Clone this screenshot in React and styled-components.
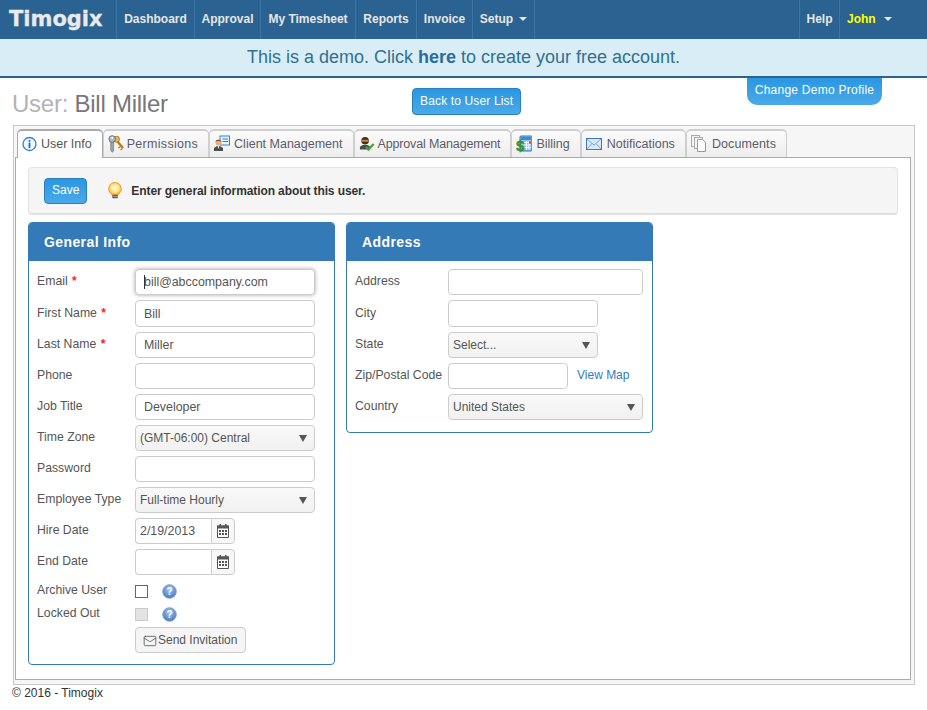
import React from "react";
import styled, { createGlobalStyle } from "styled-components";
import { Mail } from "lucide-react";

const GlobalStyle = createGlobalStyle`
  html, body {
    margin: 0;
    padding: 0;
    background: #fff;
  }
  body {
    font-family: "Liberation Sans", Arial, sans-serif;
    font-size: 12px;
    color: #555;
  }
  * { box-sizing: border-box; }
`;

const NavBar = styled.div`
  display: flex;
  align-items: stretch;
  height: 39px;
  background: #2a6291;
`;
const Logo = styled.div`
  width: 116px;
  padding-left: 9px;
  font-family: "DejaVu Sans", sans-serif;
  font-weight: 700;
  font-size: 21px;
  line-height: 39px;
  color: #eaeaea;
  -webkit-text-stroke: 0.3px #eaeaea;
`;
const NavItem = styled.a`
  display: flex;
  flex: none;
  align-items: center;
  justify-content: center;
  gap: ${(p) => p.$gap || 6}px;
  width: ${(p) => p.$w}px;
  padding-bottom: 2px;
  border-left: 1px solid #3c74a3;
  border-right: ${(p) => (p.$end ? "1px solid #3c74a3" : "0")};
  font-weight: 700;
  font-size: 12px;
  color: ${(p) => p.$color || "#e6e6e6"};
`;
const UserItem = styled(NavItem)`
  justify-content: flex-start;
  padding-left: 7px;
`;
const NavRight = styled.div`
  display: flex;
  margin-left: auto;
`;
const Caret = styled.span`
  width: 0;
  height: 0;
  margin-top: 1px;
  border-left: 4px solid transparent;
  border-right: 4px solid transparent;
  border-top: 4px solid #e6e6e6;
`;
const Banner = styled.div`
  position: relative;
  height: 39px;
  background: #d9edf7;
  border-bottom: 2px solid #2a6291;
  color: #31708f;
  font-size: 18px;
  line-height: 37px;
  text-align: center;
  b { color: #2a6c9e; }
`;
const DemoTab = styled.a`
  position: absolute;
  top: calc(100% + 2px);
  right: 45px;
  width: 135px;
  height: 27px;
  border-radius: 0 0 10px 10px;
  background: linear-gradient(#2a97e2, #4aa9e9);
  color: #fff;
  font-size: 12px;
  letter-spacing: 0.25px;
  line-height: 25px;
  text-align: center;
`;
const TitleRow = styled.div`
  display: flex;
  align-items: flex-start;
  height: 47px;
  padding: 10px 0 0 12px;
`;
const Title = styled.h1`
  width: 400px;
  margin: 0;
  font-size: 24px;
  font-weight: 400;
  letter-spacing: -0.25px;
  line-height: 32px;
  color: #777;
  span { color: #b3b3b3; }
`;
const BlueButton = styled.button`
  height: ${(p) => p.$h || 27}px;
  padding: 0 7px 1px;
  border: 1px solid #2a7fc0;
  border-radius: 4px;
  background: linear-gradient(#2a97e2, #4aa9e9);
  color: #fff;
  font-family: inherit;
  font-size: 12px;
  letter-spacing: ${(p) => p.$ls || 0};
`;
const SaveButton = styled(BlueButton)`
  margin-right: 20px;
`;
const Outer = styled.div`
  width: 902px;
  margin-left: 13px;
  padding: 3px 3px 4px 1px;
  border: 1px solid #c8c8c8;
  background: #f6f6f6;
`;
const TabBar = styled.div`
  display: flex;
  height: 29px;
  margin-bottom: -1px;
  padding-left: 2px;
`;
const Tab = styled.div`
  position: relative;
  display: flex;
  align-items: center;
  gap: ${(p) => p.$gap || 3}px;
  height: ${(p) => (p.$active ? 29 : 28)}px;
  padding: 0 10px 1px 4px;
  border: 1px solid ${(p) => (p.$active ? "#aaa" : "#cfcfcf")};
  border-top-width: 2px;
  border-bottom: 0;
  border-radius: 5px 5px 0 0;
  background: ${(p) => (p.$active ? "#fff" : "linear-gradient(#fbfbfb, #ededed)")};
  color: ${(p) => (p.$active ? "#555" : "#5c5c68")};
  font-size: 12.5px;
  letter-spacing: ${(p) => p.$ls || 0}px;
  z-index: ${(p) => (p.$active ? 2 : 0)};
  svg { flex: none; }
`;
const TabBody = styled.div`
  position: relative;
  padding: 9px 12px 14px;
  border: 1px solid #aaa;
  background: #fff;
`;
const Toolbar = styled.div`
  display: flex;
  align-items: center;
  height: 48px;
  margin-bottom: 7px;
  padding: 0 15px;
  border: 1px solid #e3e3e3;
  border-bottom: 2px solid #e0e0e0;
  border-radius: 4px;
  background: #f5f5f5;
`;
const Hint = styled.span`
  margin-left: 8px;
  font-weight: 700;
  font-size: 12px;
  letter-spacing: -0.1px;
  color: #333;
`;
const Columns = styled.div`
  display: flex;
  align-items: flex-start;
  gap: 11px;
`;
const Panel = styled.section`
  width: 307px;
  border: 1px solid #337ab7;
  border-radius: 4px;
  overflow: hidden;
`;
const PanelHead = styled.h2`
  height: 38px;
  margin: 0;
  padding-left: 15px;
  background: #337ab7;
  color: #fff;
  font-size: 14px;
  letter-spacing: 0.4px;
  line-height: 38px;
`;
const PanelBody = styled.div`
  padding: 8px 9px ${(p) => p.$pb}px 8px;
`;
const Label = styled.label`
  flex: none;
  width: ${(p) => p.$w || 98}px;
  padding-bottom: 2px;
  font-size: 12.25px;
  color: #555;
  i {
    margin-left: 1px;
    font-style: normal;
    font-weight: 700;
    font-size: 12px;
    color: #f22;
  }
`;
const Row = styled.div`
  position: relative;
  display: flex;
  align-items: center;
  height: ${(p) => (p.$tall ? 27 : 26)}px;
  margin-bottom: 5px;
`;
const CheckRow = styled(Row)`
  height: 23px;
  margin-bottom: 0;
  ${Label} { padding-bottom: 4px; }
`;
const Field = styled.input`
  width: ${(p) => p.$w}px;
  height: 100%;
  padding: 0 0 0 ${(p) => p.$pad ?? 8}px;
  border: 1px solid #ccc;
  border-radius: 4px;
  background: #fff;
  color: #555;
  font-family: inherit;
  font-size: 12.4px;
  outline: none;
  box-shadow: ${(p) => (p.$focus ? "0 0 4px rgba(0,0,0,.35)" : "none")};
`;
const Cursor = styled.span`
  position: absolute;
  top: 6px;
  left: 107px;
  width: 1px;
  height: 14px;
  background: #333;
`;
const SelectWrap = styled.div`
  position: relative;
  width: ${(p) => p.$w}px;
  height: 100%;
  &::after {
    content: "";
    position: absolute;
    top: 10px;
    right: 8px;
    border-left: 4px solid transparent;
    border-right: 4px solid transparent;
    border-top: 7px solid #555;
  }
`;
const Select = styled.select`
  width: 100%;
  height: 100%;
  padding: 0 0 0 4px;
  border: 1px solid #ccc;
  border-radius: 4px;
  appearance: none;
  background: linear-gradient(#f9f9f9, #f1f1f1);
  color: #555;
  font-family: inherit;
  font-size: 12px;
`;
const DateGroup = styled.div`
  display: flex;
  width: 100px;
  height: 100%;
  input {
    border-right: 0;
    border-radius: 4px 0 0 4px;
  }
`;
const DateAddon = styled.span`
  display: flex;
  align-items: center;
  justify-content: center;
  width: 24px;
  border: 1px solid #ccc;
  border-radius: 0 4px 4px 0;
  background: #f7f7f7;
`;
const Check = styled.input.attrs({ type: "checkbox" })`
  width: 13px;
  height: 13px;
  margin: 0 14px 0 0;
  border: 1px solid ${(p) => (p.disabled ? "#ccc" : "#666")};
  background: ${(p) => (p.disabled ? "#e3e3e3" : "#fff")};
  appearance: none;
`;
const ActionRow = styled.div`
  margin: 1px 0 0 98px;
`;
const PlainButton = styled.button`
  display: inline-flex;
  align-items: center;
  gap: 1px;
  height: 26px;
  padding: 0 8px 1px 7px;
  border: 1px solid #ccc;
  border-radius: 4px;
  background: #f5f5f5;
  color: #555;
  font-family: inherit;
  font-size: 12px;
  svg { margin-top: 3px; }
`;
const MapLink = styled.a`
  margin-left: 9px;
  padding-bottom: 2px;
  color: #337ab7;
  font-size: 12px;
`;
const Footer = styled.div`
  padding: 1px 0 0 12px;
  font-size: 12px;
  line-height: 15px;
  color: #333;
`;

const InfoIcon = () => (
  <svg width="15" height="16" viewBox="0 0 15 16">
    <circle cx="7.5" cy="8" r="6.5" fill="#f4f9ff" stroke="#2f7fd2" strokeWidth="1.3" />
    <rect x="6.6" y="3.9" width="1.8" height="1.8" fill="#2468b8" />
    <rect x="6.6" y="6.6" width="1.8" height="5.4" fill="#2468b8" />
  </svg>
);
const KeysIcon = () => (
  <svg width="16" height="18" viewBox="0 0 16 18">
    <path d="M9 6l6 7" stroke="#b87c1e" strokeWidth="2.4" fill="none" />
    <path d="M12.5 11.5l-2 1.5M14.5 13.5l-2 1.5" stroke="#b87c1e" strokeWidth="1.2" fill="none" />
    <circle cx="8.5" cy="4.2" r="3" fill="#eab554" stroke="#b87c1e" />
    <path d="M2.8 6v9l1.4 2.2L5.6 16v-1.5L4.8 14l.8-.6v-1l-.8-.5.8-.6V6z" fill="#a3abb1" stroke="#5f6a72" strokeWidth=".7" />
    <circle cx="4.2" cy="4" r="3.3" fill="#b3bbc1" stroke="#5f6a72" strokeWidth=".9" />
    <circle cx="4.2" cy="2.8" r="1" fill="#fff" />
  </svg>
);
const ClientIcon = () => (
  <svg width="16" height="17" viewBox="0 0 16 17">
    <rect x="6" y="1" width="9.5" height="9" fill="#e6f3ff" stroke="#2a86d8" />
    <path d="M8.5 4h5.5M8.5 6.5h5.5" stroke="#2a86d8" />
    <path d="M0 16v-3l3-2h3l3 2v3z" fill="#4a4f50" />
    <path d="M3.6 11h1.8l-.9 3z" fill="#eee" />
    <circle cx="4.5" cy="7.5" r="3" fill="#e6b184" />
    <path d="M1.6 7c0-3 5.8-3 5.8 0-1-1.2-4.8-1.2-5.8 0z" fill="#7a4a20" />
  </svg>
);
const ApprovalIcon = () => (
  <svg width="16" height="17" viewBox="0 0 17 17">
    <path d="M1 15v-3l3-2h5l3 2v3z" fill="#4b4b4b" />
    <circle cx="6.5" cy="5.5" r="4" fill="#3a3028" />
    <rect x="3" y="4.6" width="7" height="2" fill="#d8802a" />
    <path d="M7.5 12l2.5 3 5.5-6" fill="none" stroke="#3fa63a" strokeWidth="2.4" />
  </svg>
);
const BillingIcon = () => (
  <svg width="16" height="18" viewBox="0 0 16 18">
    <rect x="4" y="1" width="12" height="15" rx="1" fill="#8fc2ec" stroke="#2c78b8" />
    <rect x="5" y="2" width="10" height="3" fill="#3a8ed4" />
    <path d="M8 7.5h7M8 10h7M8 12.5h7M10.5 6v9M13 6v9" stroke="#fff" strokeWidth=".9" />
    <rect x="13" y="6.5" width="2" height="2" fill="#e03030" />
    <text x="0" y="16" fontFamily="Liberation Sans" fontWeight="700" fontSize="15" fill="#3c9c2e" stroke="#2d7a22" strokeWidth=".4">$</text>
  </svg>
);
const MailIcon = () => (
  <svg width="16" height="12" viewBox="0 0 16 12">
    <rect x=".5" y=".5" width="15" height="11" fill="#dbe8f8" stroke="#3f78c0" />
    <path d="M1 1l7 6 7-6M1 11l5-5.5M15 11l-5-5.5" fill="none" stroke="#7ba4d8" />
  </svg>
);
const DocsIcon = () => (
  <svg width="16" height="17" viewBox="0 0 16 17">
    <rect x=".5" y=".5" width="8" height="11" fill="#f4f4f4" stroke="#aaa" />
    <rect x="3.5" y="2.5" width="8" height="11" fill="#f8f8f8" stroke="#aaa" />
    <path d="M6.5 4.5h5l3 3v9h-8z" fill="#fff" stroke="#999" />
  </svg>
);
const BulbIcon = () => (
  <svg width="16" height="17" viewBox="0 0 16 17">
    <defs>
      <radialGradient id="bulbGlow" cx=".5" cy=".45" r=".55">
        <stop offset="0" stopColor="#fffce8" />
        <stop offset=".55" stopColor="#ffe888" />
        <stop offset="1" stopColor="#f4a830" />
      </radialGradient>
    </defs>
    <path d="M8 .5a6.3 6.3 0 0 1 3.2 11.7v.8H4.8v-.8A6.3 6.3 0 0 1 8 .5z" fill="url(#bulbGlow)" stroke="#ec9e2c" strokeWidth=".9" />
    <rect x="5.2" y="12.8" width="5.6" height="3.4" rx=".8" fill="#5c5c5c" />
    <path d="M5.2 14.4h5.6" stroke="#bbb" strokeWidth=".7" />
  </svg>
);
const CalendarIcon = () => (
  <svg width="12" height="14" viewBox="0 0 12 14">
    <path d="M.5 2h11v11.5H.5z" fill="#fff" stroke="#555" />
    <rect x="0" y="1.5" width="12" height="3" fill="#555" />
    <rect x="2.5" y="0" width="1.5" height="3" fill="#555" />
    <rect x="8" y="0" width="1.5" height="3" fill="#555" />
    <path d="M2 6h2v2H2zM5 6h2v2H5zM8 6h2v2H8zM2 9h2v2H2zM5 9h2v2H5zM8 9h2v2H8z" fill="#555" />
  </svg>
);
const HelpIcon = () => (
  <svg width="15" height="15" viewBox="0 0 15 15">
    <defs>
      <radialGradient id="helpBall" cx=".5" cy=".35" r=".7">
        <stop offset="0" stopColor="#a9c8ee" />
        <stop offset="1" stopColor="#3a70b4" />
      </radialGradient>
    </defs>
    <circle cx="7.5" cy="7.5" r="6.8" fill="url(#helpBall)" stroke="#7ea3d2" />
    <text x="7.5" y="11" textAnchor="middle" fontFamily="Liberation Sans" fontWeight="700" fontSize="10" fill="#fff">?</text>
  </svg>
);

const tabs = [
  { name: "User Info", icon: <InfoIcon />, active: true, gap: 4 },
  { name: "Permissions", icon: <KeysIcon />, gap: 3, ls: 0.3 },
  { name: "Client Management", icon: <ClientIcon />, gap: 4 },
  { name: "Approval Management", icon: <ApprovalIcon />, gap: 3, ls: -0.15 },
  { name: "Billing", icon: <BillingIcon />, gap: 4 },
  { name: "Notifications", icon: <MailIcon />, gap: 5 },
  { name: "Documents", icon: <DocsIcon />, gap: 5, ls: 0.1 },
];

function Required() {
  return <i>*</i>;
}

export default function App() {
  return (
    <>
      <GlobalStyle />
      <NavBar>
        <Logo>Timogix</Logo>
        <NavItem $w={78}>Dashboard</NavItem>
        <NavItem $w={66}>Approval</NavItem>
        <NavItem $w={95}>My Timesheet</NavItem>
        <NavItem $w={61}>Reports</NavItem>
        <NavItem $w={56}>Invoice</NavItem>
        <NavItem $w={63} $end>
          Setup <Caret />
        </NavItem>
        <NavRight>
          <NavItem $w={40}>Help</NavItem>
          <UserItem $w={88} $color="#ffff00" $gap={8}>
            John <Caret />
          </UserItem>
        </NavRight>
      </NavBar>

      <Banner>
        This is a demo. Click <b>here</b> to create your free account.
        <DemoTab>Change Demo Profile</DemoTab>
      </Banner>

      <TitleRow>
        <Title>
          <span>User:</span> Bill Miller
        </Title>
        <BlueButton $ls="0.15px">Back to User List</BlueButton>
      </TitleRow>

      <Outer>
        <TabBar>
          {tabs.map((t) => (
            <Tab key={t.name} $active={t.active} $gap={t.gap} $ls={t.ls}>
              {t.icon}
              {t.name}
            </Tab>
          ))}
        </TabBar>
        <TabBody>
          <Toolbar>
            <SaveButton $h={26}>Save</SaveButton>
            <BulbIcon />
            <Hint>Enter general information about this user.</Hint>
          </Toolbar>

          <Columns>
            <Panel>
              <PanelHead>General Info</PanelHead>
              <PanelBody $pb={11}>
                <Row>
                  <Label>Email <Required /></Label>
                  <Field $w={180} $focus defaultValue="bill@abccompany.com" />
                  <Cursor />
                </Row>
                <Row $tall>
                  <Label>First Name <Required /></Label>
                  <Field $w={180} defaultValue="Bill" />
                </Row>
                <Row>
                  <Label>Last Name <Required /></Label>
                  <Field $w={180} defaultValue="Miller" />
                </Row>
                <Row>
                  <Label>Phone</Label>
                  <Field $w={180} />
                </Row>
                <Row>
                  <Label>Job Title</Label>
                  <Field $w={180} defaultValue="Developer" />
                </Row>
                <Row>
                  <Label>Time Zone</Label>
                  <SelectWrap $w={180}>
                    <Select defaultValue="central">
                      <option value="central">(GMT-06:00) Central</option>
                    </Select>
                  </SelectWrap>
                </Row>
                <Row>
                  <Label>Password</Label>
                  <Field $w={180} type="password" />
                </Row>
                <Row>
                  <Label>Employee Type</Label>
                  <SelectWrap $w={180}>
                    <Select defaultValue="fth">
                      <option value="fth">Full-time Hourly</option>
                    </Select>
                  </SelectWrap>
                </Row>
                <Row>
                  <Label>Hire Date</Label>
                  <DateGroup>
                    <Field $w={76} $pad={4} defaultValue="2/19/2013" />
                    <DateAddon><CalendarIcon /></DateAddon>
                  </DateGroup>
                </Row>
                <Row>
                  <Label>End Date</Label>
                  <DateGroup>
                    <Field $w={76} $pad={4} />
                    <DateAddon><CalendarIcon /></DateAddon>
                  </DateGroup>
                </Row>
                <CheckRow>
                  <Label>Archive User</Label>
                  <Check />
                  <HelpIcon />
                </CheckRow>
                <CheckRow>
                  <Label>Locked Out</Label>
                  <Check disabled />
                  <HelpIcon />
                </CheckRow>
                <ActionRow>
                  <PlainButton>
                    <Mail size={14} strokeWidth={1.4} />
                    Send Invitation
                  </PlainButton>
                </ActionRow>
              </PanelBody>
            </Panel>

            <Panel>
              <PanelHead>Address</PanelHead>
              <PanelBody $pb={7}>
                <Row>
                  <Label $w={93}>Address</Label>
                  <Field $w={195} />
                </Row>
                <Row $tall>
                  <Label $w={93}>City</Label>
                  <Field $w={150} />
                </Row>
                <Row>
                  <Label $w={93}>State</Label>
                  <SelectWrap $w={150}>
                    <Select defaultValue="">
                      <option value="">Select...</option>
                    </Select>
                  </SelectWrap>
                </Row>
                <Row>
                  <Label $w={93}>Zip/Postal Code</Label>
                  <Field $w={120} />
                  <MapLink>View Map</MapLink>
                </Row>
                <Row>
                  <Label $w={93}>Country</Label>
                  <SelectWrap $w={195}>
                    <Select defaultValue="us">
                      <option value="us">United States</option>
                    </Select>
                  </SelectWrap>
                </Row>
              </PanelBody>
            </Panel>
          </Columns>
        </TabBody>
      </Outer>
      <Footer>© 2016 - Timogix</Footer>
    </>
  );
}
